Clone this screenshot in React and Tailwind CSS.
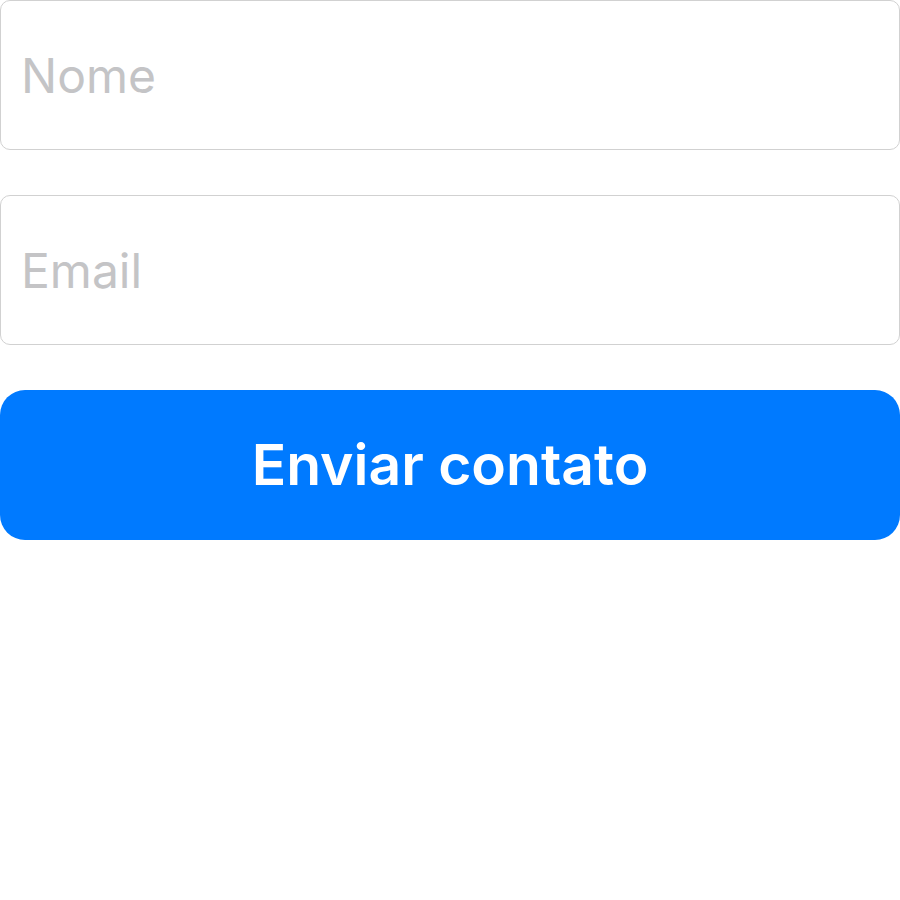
export default function App() {
  return (
    <div className="w-[900px] bg-white font-['Inter',sans-serif]">
      <form className="flex flex-col gap-[45px]" onSubmit={(e) => e.preventDefault()}>
        <input
          type="text"
          placeholder="Nome"
          className="h-[150px] w-full rounded-[10px] border border-[#d1d1d1] px-[20px] text-[48px] outline-none placeholder:text-[#c4c4c6]"
        />
        <input
          type="email"
          placeholder="Email"
          className="h-[150px] w-full rounded-[10px] border border-[#d1d1d1] px-[20px] text-[48px] outline-none placeholder:text-[#c4c4c6]"
        />
        <button
          type="submit"
          className="h-[150px] w-full rounded-[25px] bg-[#007aff] text-[57px] font-semibold text-white"
        >
          Enviar contato
        </button>
      </form>
    </div>
  );
}
